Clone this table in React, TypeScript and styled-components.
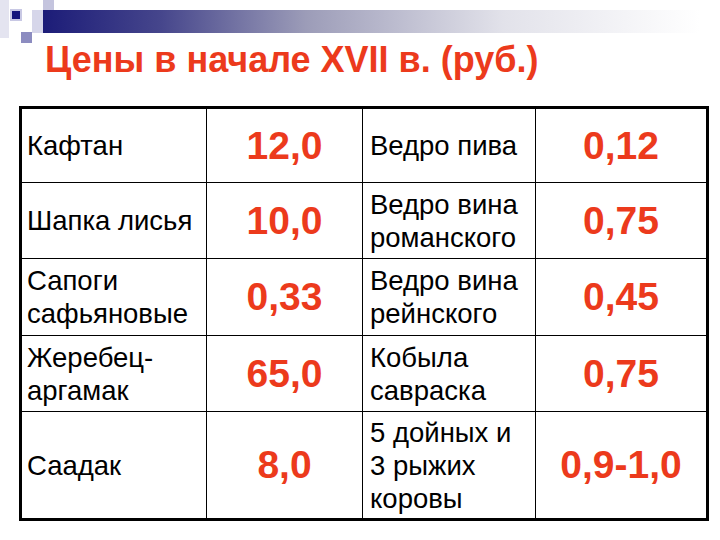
import React from 'react';
import styled, { createGlobalStyle } from 'styled-components';

// Prices table row data
interface Row {
  item: string[];
  price: string;
  item2: string[];
  price2: string;
}

const rows: Row[] = [
  { item: ['Кафтан'], price: '12,0', item2: ['Ведро пива'], price2: '0,12' },
  { item: ['Шапка лисья'], price: '10,0', item2: ['Ведро вина', 'романского'], price2: '0,75' },
  { item: ['Сапоги', 'сафьяновые'], price: '0,33', item2: ['Ведро вина', 'рейнского'], price2: '0,45' },
  { item: ['Жеребец-', 'аргамак'], price: '65,0', item2: ['Кобыла', 'савраска'], price2: '0,75' },
  { item: ['Саадак'], price: '8,0', item2: ['5 дойных и', '3 рыжих', 'коровы'], price2: '0,9-1,0' },
];

const HeaderDecor: React.FC = () => (
  <Decor width="720" height="44" viewBox="0 0 720 44">
    <defs>
      <linearGradient id="bar" x1="0" x2="1" y1="0" y2="0">
        <stop offset="0" stopColor="#1c1c78" />
        <stop offset="0.18" stopColor="#46468c" />
        <stop offset="0.4" stopColor="#9c9cb8" />
        <stop offset="0.7" stopColor="#e2e2ea" />
        <stop offset="1" stopColor="#ffffff" />
      </linearGradient>
    </defs>
    <rect x="0" y="0" width="9" height="38" fill="#e4e4f0" />
    <rect x="32" y="10" width="11" height="23" fill="#d6d6ea" />
    <rect x="43" y="0" width="11" height="22" fill="#c4c4de" />
    <rect x="43" y="10" width="657" height="23" fill="url(#bar)" />
    <rect x="10" y="9" width="12" height="12" fill="#c8c8e4" />
    <rect x="12" y="11" width="8" height="8" fill="#14147c" />
    <rect x="21" y="32" width="11" height="11" fill="#8c8cc0" />
  </Decor>
);

const App: React.FC = () => {
  return (
    <Page>
      <GlobalStyle />
      <HeaderDecor />
      <Title>Цены в начале XVII в. (руб.)</Title>
      <Table>
        {rows.map((row, i) => (
          <React.Fragment key={i}>
            <Label $pad={5}>
              {row.item.map((line) => (
                <span key={line}>{line}</span>
              ))}
            </Label>
            <Price>{row.price}</Price>
            <Label $pad={7}>
              {row.item2.map((line) => (
                <span key={line}>{line}</span>
              ))}
            </Label>
            <Price>{row.price2}</Price>
          </React.Fragment>
        ))}
      </Table>
    </Page>
  );
};

export default App;

// Styled Components
const GlobalStyle = createGlobalStyle`
  body {
    margin: 0;
    background: #ffffff;
    font-family: "Liberation Sans", Arial, sans-serif;
  }
`;

const Page = styled.div`
  width: 720px;
  height: 540px;
  background: #ffffff;
  overflow: hidden;
`;

const Decor = styled.svg`
  display: block;
`;

const Title = styled.h1`
  margin: -4px 0 0 0;
  padding-left: 45px;
  height: 40px;
  line-height: 40px;
  font-size: 36px;
  font-weight: bold;
  color: #ec3a1c;
`;

const Table = styled.div`
  margin: 26px 0 0 19px;
  width: 690px;
  box-sizing: border-box;
  display: grid;
  grid-template-columns: 184px 155px 172px 170px;
  grid-template-rows: 73px 75px 76px 75px 106px;
  gap: 1px;
  background: #000000;
  border: 3px solid #000000;
`;

const Label = styled.div<{ $pad: number }>`
  background: #ffffff;
  display: flex;
  flex-direction: column;
  justify-content: center;
  padding-left: ${(p) => p.$pad}px;
  font-size: 27.5px;
  line-height: 33px;
  color: #000000;
  white-space: nowrap;
`;

const Price = styled.div`
  background: #ffffff;
  display: flex;
  align-items: center;
  justify-content: center;
  font-size: 39px;
  font-weight: bold;
  color: #ec3a1c;
`;
